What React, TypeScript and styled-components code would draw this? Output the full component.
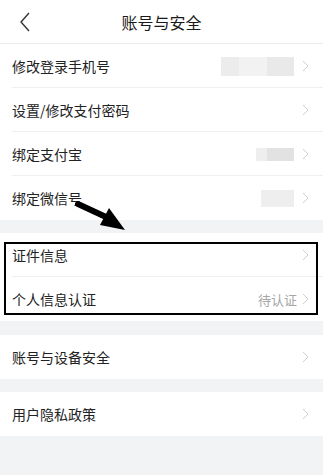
import styled, { createGlobalStyle } from "styled-components"

const Global = createGlobalStyle`
  html, body { margin: 0; padding: 0; background: #f2f3f5; }
  body { font-family: "Noto Sans CJK SC", "Noto Sans", sans-serif; }
`

const Page = styled.div`
  width: 323px;
  min-height: 475px;
  background: #f2f3f5;
  position: relative;
`

const Header = styled.div`
  height: 43px;
  background: #fff;
  border-bottom: 1px solid #ececec;
  display: flex;
  align-items: center;
  justify-content: center;
  position: relative;
  font-size: 16px;
  color: #1a1a1a;
`

const Back = styled.svg`
  position: absolute;
  left: 19px;
  top: 12px;
`

const Section = styled.div<{ $gap?: number }>`
  background: #fff;
  margin-top: ${p => p.$gap ?? 0}px;
  position: relative;
`

const Row = styled.div<{ $last?: boolean }>`
  height: 44px;
  display: flex;
  align-items: center;
  padding: 0 14px 0 12px;
  position: relative;
  &::after {
    content: "";
    display: ${p => (p.$last ? "none" : "block")};
    position: absolute;
    left: 12px;
    right: 0;
    bottom: 0;
    height: 1px;
    background: #efefef;
  }
`

const Label = styled.div`
  flex: 1;
  font-size: 14px;
  color: #222;
`

const Value = styled.div`
  font-size: 13px;
  color: #a6a6a6;
  margin-right: 5px;
`

const Mask = styled.div<{ $w: number; $h: number }>`
  width: ${p => p.$w}px;
  height: ${p => p.$h}px;
  margin-right: 8px;
  display: flex;
`

const Seg = styled.div<{ $c: string; $w: number }>`
  width: ${p => p.$w}px;
  background: ${p => p.$c};
`

const Frame = styled.div`
  position: absolute;
  left: 4px;
  right: 5px;
  top: 9px;
  height: 69px;
  border: 2px solid #000;
  pointer-events: none;
`

const Arrow = styled.svg`
  position: absolute;
  left: 74px;
  top: 194px;
`

const Chevron = () => (
  <svg width="7" height="12" viewBox="0 0 7 12">
    <path d="M1 1 L6 6 L1 11" fill="none" stroke="#cfcfcf" strokeWidth="1" />
  </svg>
)

export default function App() {
  return (
    <Page>
      <Global />
      <Header>
        <Back width="12" height="20" viewBox="0 0 12 20">
          <path d="M10 1 L2 10 L10 19" fill="none" stroke="#333" strokeWidth="1.4" />
        </Back>
        账号与安全
      </Header>
      <Section>
        <Row>
          <Label>修改登录手机号</Label>
          <Mask $w={73} $h={19}>
            <Seg $c="#ececec" $w={18} />
            <Seg $c="#f2f2f2" $w={28} />
            <Seg $c="#e9e9e9" $w={27} />
          </Mask>
          <Chevron />
        </Row>
        <Row>
          <Label>设置/修改支付密码</Label>
          <Chevron />
        </Row>
        <Row>
          <Label>绑定支付宝</Label>
          <Mask $w={38} $h={13}>
            <Seg $c="#eeeeee" $w={11} />
            <Seg $c="#e2e2e2" $w={27} />
          </Mask>
          <Chevron />
        </Row>
        <Row $last>
          <Label>绑定微信号</Label>
          <Mask $w={33} $h={17}>
            <Seg $c="#eeeeee" $w={33} />
          </Mask>
          <Chevron />
        </Row>
      </Section>
      <Section $gap={13}>
        <Row>
          <Label>证件信息</Label>
          <Chevron />
        </Row>
        <Row $last>
          <Label>个人信息认证</Label>
          <Value>待认证</Value>
          <Chevron />
        </Row>
        <Frame />
      </Section>
      <Section $gap={14}>
        <Row $last>
          <Label>账号与设备安全</Label>
          <Chevron />
        </Row>
      </Section>
      <Section $gap={13}>
        <Row $last>
          <Label>用户隐私政策</Label>
          <Chevron />
        </Row>
      </Section>
      <Arrow width="58" height="40" viewBox="0 0 58 40">
        <path d="M4 10 L32 23" stroke="#000" strokeWidth="6" strokeLinecap="round" />
        <polygon points="35,14 26,31 51,36" fill="#000" />
      </Arrow>
    </Page>
  )
}
